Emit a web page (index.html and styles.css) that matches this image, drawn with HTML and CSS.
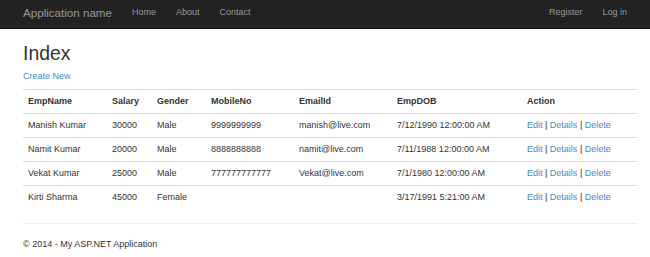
FILE: index.html
```html
<!DOCTYPE html>
<html lang="en">
<head>
  <meta charset="UTF-8">
  <title>Index - My ASP.NET Application</title>
  <link rel="stylesheet" href="styles.css">
</head>
<body>
  <div class="navbar">
    <div class="nav-inner">
      <a class="brand" href="#">Application name</a>
      <ul class="nav">
        <li><a href="#">Home</a></li>
        <li><a href="#">About</a></li>
        <li><a href="#">Contact</a></li>
      </ul>
      <ul class="nav nav-right">
        <li><a href="#">Register</a></li>
        <li><a href="#">Log in</a></li>
      </ul>
    </div>
  </div>
  <div class="container body-content">
    <h2>Index</h2>
    <p class="create"><a href="#">Create New</a></p>
    <table class="table">
      <colgroup>
        <col class="c-name"><col class="c-salary"><col class="c-gender"><col class="c-mobile">
        <col class="c-email"><col class="c-dob"><col class="c-action">
      </colgroup>
      <thead>
        <tr>
          <th>EmpName</th><th>Salary</th><th>Gender</th><th>MobileNo</th>
          <th>EmailId</th><th>EmpDOB</th><th>Action</th>
        </tr>
      </thead>
      <tbody>
        <tr>
          <td>Manish Kumar</td><td>30000</td><td>Male</td><td>9999999999</td>
          <td>manish@live.com</td><td>7/12/1990 12:00:00 AM</td>
          <td><a href="#">Edit</a> | <a href="#">Details</a> | <a href="#">Delete</a></td>
        </tr>
        <tr>
          <td>Namit Kumar</td><td>20000</td><td>Male</td><td>8888888888</td>
          <td>namit@live.com</td><td>7/11/1988 12:00:00 AM</td>
          <td><a href="#">Edit</a> | <a href="#">Details</a> | <a href="#">Delete</a></td>
        </tr>
        <tr>
          <td>Vekat Kumar</td><td>25000</td><td>Male</td><td>777777777777</td>
          <td>Vekat@live.com</td><td>7/1/1980 12:00:00 AM</td>
          <td><a href="#">Edit</a> | <a href="#">Details</a> | <a href="#">Delete</a></td>
        </tr>
        <tr>
          <td>Kirti Sharma</td><td>45000</td><td>Female</td><td></td>
          <td></td><td>3/17/1991 5:21:00 AM</td>
          <td><a href="#">Edit</a> | <a href="#">Details</a> | <a href="#">Delete</a></td>
        </tr>
      </tbody>
    </table>
    <hr>
    <footer>
      <p>&copy; 2014 - My ASP.NET Application</p>
    </footer>
  </div>
</body>
</html>
```

FILE: styles.css
```css
html, body {
  margin: 0;
  padding: 0;
}
body {
  font-family: "Liberation Sans", Arial, sans-serif;
  font-size: 9px;
  line-height: 1.43;
  color: #333;
  background: #fff;
}
a {
  color: #428bca;
  text-decoration: none;
}
.navbar {
  background: #222;
  border-bottom: 1px solid #080808;
  height: 28px;
}
.nav-inner {
  display: flex;
  align-items: flex-start;
  height: 100%;
  padding: 0 13px 0 23px;
}
.brand {
  color: #999;
  font-size: 11.6px;
  margin-right: 10px;
  line-height: 25px;
}
.nav {
  list-style: none;
  margin: 0;
  padding: 0;
  display: flex;
}
.nav a {
  display: block;
  color: #999;
  padding: 0 10px;
  line-height: 25px;
}
.nav-right {
  margin-left: auto;
}
.container {
  padding: 0 13px 0 23px;
}
h2 {
  font-size: 19.4px;
  font-weight: 500;
  line-height: 1.1;
  margin: 14px 0 6px;
  color: #333;
}
.create {
  margin: 0 0 6px;
}
.table {
  width: 614px;
  border-collapse: collapse;
  margin-bottom: 13px;
}
.c-name { width: 84px; }
.c-salary { width: 45px; }
.c-gender { width: 54px; }
.c-mobile { width: 88px; }
.c-email { width: 98px; }
.c-dob { width: 130px; }
.c-action { width: 115px; }
.table th, .table td {
  padding: 5px;
  text-align: left;
  vertical-align: top;
  border-top: 1px solid #ddd;
  line-height: 13px;
  white-space: nowrap;
}
.table th {
  font-weight: bold;
  border-bottom: 1px solid #ddd;
}
.table tbody tr:first-child td {
  border-top: 0;
}
.table tbody tr:last-child td {
  padding-bottom: 6px;
}
hr {
  border: 0;
  border-top: 1px solid #eee;
  margin: 13px 0 12px;
}
footer p {
  margin: 0 0 6px;
  padding-top: 2px;
}
```
